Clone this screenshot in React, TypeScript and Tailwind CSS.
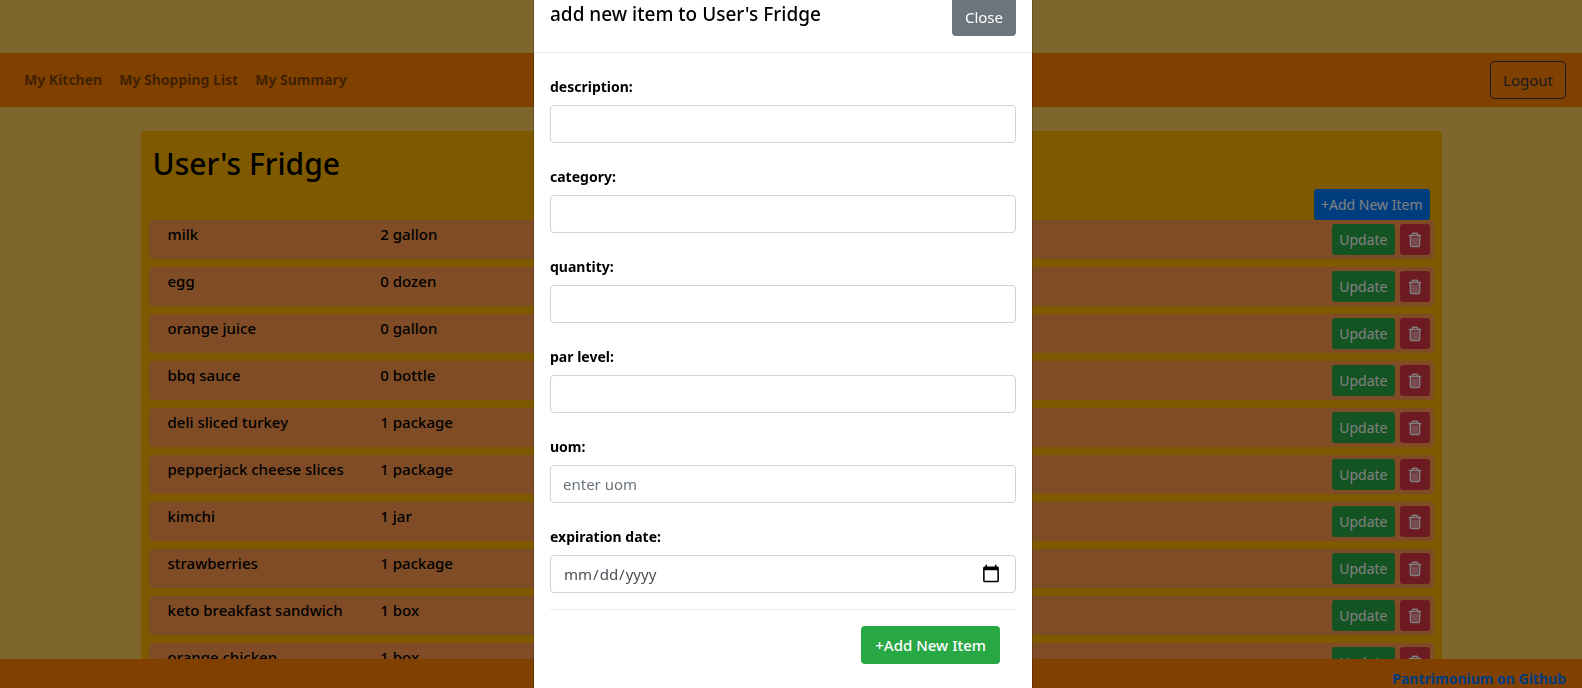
type Item = { name: string; amount: string };

const items: Item[] = [
  { name: "milk", amount: "2 gallon" },
  { name: "egg", amount: "0 dozen" },
  { name: "orange juice", amount: "0 gallon" },
  { name: "bbq sauce", amount: "0 bottle" },
  { name: "deli sliced turkey", amount: "1 package" },
  { name: "pepperjack cheese slices", amount: "1 package" },
  { name: "kimchi", amount: "1 jar" },
  { name: "strawberries", amount: "1 package" },
  { name: "keto breakfast sandwich", amount: "1 box" },
  { name: "orange chicken", amount: "1 box" },
];

const fields = [
  { id: "description", label: "description:", type: "text" },
  { id: "category", label: "category:", type: "text" },
  { id: "quantity", label: "quantity:", type: "text" },
  { id: "par-level", label: "par level:", type: "text" },
  { id: "uom", label: "uom:", type: "text", placeholder: "enter uom" },
  { id: "expiration-date", label: "expiration date:", type: "date" },
];

function TrashIcon() {
  return (
    <svg width="16" height="16" viewBox="0 0 16 16" fill="none" stroke="currentColor" aria-hidden="true">
      <path d="M1.8 3.500h12.400M5.400 3.400V2.200c0-.6.4-1 1-1h3.200c.6 0 1 .4 1 1v1.200" strokeWidth="1.600" />
      <path d="M3.500 4v9c0 .9.5 1.400 1.400 1.400h6.200c.9 0 1.400-.5 1.400-1.400V4" strokeWidth="1.700" />
      <path d="M6 5.500v7.500M8 5.500v7.500M10 5.500v7.500" strokeWidth="1" />
    </svg>
  );
}

function NavBar() {
  return (
    <nav className="flex items-center justify-between bg-[#ff8000] px-4 py-2">
      <div className="flex gap-[17px] px-2 text-sm font-bold text-black/50">
        <a href="#kitchen">My Kitchen</a>
        <a href="#shopping">My Shopping List</a>
        <a href="#summary">My Summary</a>
      </div>
      <button className="h-[38px] rounded border border-[#343a40] px-3 text-[15px] text-[#343a40]">Logout</button>
    </nav>
  );
}

function ItemRow({ item }: { item: Item }) {
  return (
    <li className="grid grid-cols-6 rounded bg-[#ff994d] p-1 text-[15px] font-medium">
      <span className="pl-[15px] leading-5 whitespace-nowrap">{item.name}</span>
      <span className="pl-[15px] leading-5">{item.amount}</span>
      <div className="col-span-4 flex justify-end gap-[5px] text-sm font-normal text-white">
        <button className="h-[31px] rounded-[3px] bg-[#28a745] px-[7px]">Update</button>
        <button className="flex h-[31px] w-[30px] items-center justify-center rounded-[3px] bg-[#dc3545]" aria-label={`Delete ${item.name}`}>
          <TrashIcon />
        </button>
      </div>
    </li>
  );
}

function AddItemModal() {
  return (
    <div className="fixed inset-0 flex items-start justify-center overflow-hidden bg-black/50 pr-4">
      <div role="dialog" aria-modal="true" aria-labelledby="modal-title" className="-mt-[19px] w-full max-w-[500px] rounded-md border border-black/20 bg-white bg-clip-padding">
        <div className="flex items-start justify-between border-b border-[#e9ecef] p-4">
          <h5 id="modal-title" className="text-[19px] leading-8 font-medium">add new item to User's Fridge</h5>
          <button className="h-[38px] rounded bg-[#6c757d] px-[13px] text-[15px] text-white">Close</button>
        </div>
        <form className="px-4 pt-6 pb-8">
          <div className="flex flex-col gap-6">
            {fields.map((f) => (
              <div key={f.id} className="flex flex-col gap-2">
                <label htmlFor={f.id} className="text-sm leading-5 font-bold">{f.label}</label>
                <input
                  id={f.id}
                  type={f.type}
                  placeholder={f.placeholder}
                  className="h-[38px] w-full rounded border border-[#ced4da] bg-white px-3 text-[15px] text-[#495057] placeholder:text-[#6c757d] [&::-webkit-calendar-picker-indicator]:size-5"
                />
              </div>
            ))}
          </div>
          <div className="mt-4 flex justify-end border-t border-[#e9ecef] p-4">
            <button type="button" className="h-[38px] rounded bg-[#28a745] px-[14px] text-[15px] font-medium text-white">+Add New Item</button>
          </div>
        </form>
      </div>
    </div>
  );
}

export default function App() {
  return (
    <div className="h-screen overflow-hidden bg-[#ffcc5b] pt-[53px] font-['Segoe_UI','Noto_Sans',sans-serif] text-base text-black">
      <NavBar />
      <main className="mx-auto mt-6 max-w-[1301px] rounded bg-[#ffb300] px-2 pt-3">
        <div className="px-1">
          <h2 className="mb-1 text-[30px] leading-[42px] font-medium">User's Fridge</h2>
          <div className="flex justify-end">
            <button className="h-[31px] rounded-[3px] bg-[#007bff] px-[7px] text-sm text-white">+Add New Item</button>
          </div>
        </div>
        <ul className="flex flex-col gap-2 pb-16">
          {items.map((item) => (
            <ItemRow key={item.name} item={item} />
          ))}
        </ul>
      </main>
      <footer className="fixed inset-x-0 bottom-0 h-[29px] overflow-hidden bg-[#ff8000] px-4 pt-2 text-right text-sm leading-6 font-bold">
        <a href="#github" className="text-[#007bff]">Pantrimonium on Github</a>
      </footer>
      <AddItemModal />
    </div>
  );
}
